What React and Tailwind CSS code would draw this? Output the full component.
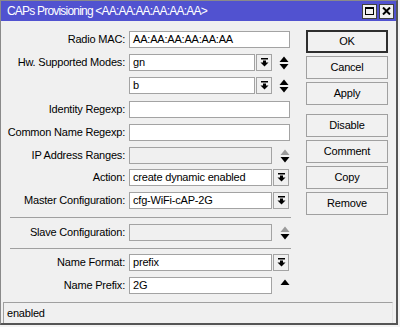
import React from 'react';

const DropIcon = () => (
  <svg width="9" height="9" viewBox="0 0 9 9">
    <rect x="1" y="0" width="7" height="1.5" fill="#000" />
    <path d="M3 2.5h3v2h2.5L4.5 8.5 0.5 4.5H3z" fill="#000" />
  </svg>
);

const UpDown = ({ upColor = '#000', downColor = '#000', down = true }) => (
  <svg width="10" height="14" viewBox="0 0 10 14">
    <path d="M5 0.5L9.5 6H0.5z" fill={upColor} />
    {down && <path d="M0.5 8H9.5L5 13.5z" fill={downColor} />}
  </svg>
);

const Field = ({ value = '', width, disabled }) => (
  <div
    className={`h-[17px] border border-[#a3a3a3] pl-[3px] leading-[15px] text-[11px] tracking-[-0.2px] text-black whitespace-nowrap overflow-hidden ${disabled ? 'bg-[#f0f0f0]' : 'bg-white'}`}
    style={{ width }}
  >
    {value}
  </div>
);

const DropBtn = () => (
  <div className="w-[16px] h-[17px] border border-[#a3a3a3] bg-[#f0f0f0] flex items-center justify-center">
    <DropIcon />
  </div>
);

const Row = ({ label, className = '', children }) => (
  <div className={`flex items-center h-[17px] ${className}`}>
    <div className="w-[124px] text-right text-[11px] tracking-[-0.2px] text-black whitespace-nowrap">{label}</div>
    <div className="ml-[4px] flex items-center">{children}</div>
  </div>
);

const Arrows = (props) => (
  <div className="w-[18px] flex items-center justify-end pr-[1px]">
    <UpDown {...props} />
  </div>
);

const Btn = ({ children, primary, className = '' }) => (
  <div
    className={`h-[23px] flex items-center justify-center text-[11px] tracking-[-0.2px] text-black bg-[#f1f1f1] ${primary ? 'border-2 border-[#2e2e2e]' : 'border border-[#a0a0a0]'} ${className}`}
  >
    {children}
  </div>
);

const Separator = ({ className = '' }) => (
  <div className={`ml-[9px] w-[281px] border-t border-[#a0a0a0] ${className}`} />
);

export default function App() {
  return (
    <div className="w-[400px] h-[327px] bg-[#f3f3f3] overflow-hidden font-['Liberation_Sans',Arial,sans-serif]">
      <div className="w-[398px] h-[325px] bg-[#f0f0f0] border-t border-l border-[#8a8a8a] border-r-2 border-b-2 border-r-[#555] border-b-[#555] flex flex-col">
        {/* Title bar */}
        <div className="h-[20px] bg-[#5152d0] flex items-center pl-[6px] pr-[2px]">
          <span className="text-white text-[12px] tracking-[-0.8px] whitespace-nowrap">
            CAPs Provisioning &lt;AA:AA:AA:AA:AA:AA&gt;
          </span>
          <div className="ml-auto flex gap-[2px]">
            <div className="w-[15px] h-[15px] bg-[#f0f0f0] border border-[#404040] flex items-center justify-center">
              <div className="w-[9px] h-[8px] border border-black border-t-2" />
            </div>
            <div className="w-[15px] h-[15px] bg-[#f0f0f0] border border-[#404040] flex items-center justify-center">
              <svg width="9" height="8" viewBox="0 0 9 8">
                <path d="M1 0.5L8 7.5M8 0.5L1 7.5" stroke="#000" strokeWidth="2" />
              </svg>
            </div>
          </div>
        </div>

        <div className="flex flex-1">
          {/* Form */}
          <div className="w-[305px] pt-[10px] flex flex-col">
            <Row label="Radio MAC:">
              <Field value="AA:AA:AA:AA:AA:AA" width={161} />
            </Row>
            <Row label="Hw. Supported Modes:" className="mt-[6px]">
              <Field value="gn" width={126} />
              <div className="ml-[1px]"><DropBtn /></div>
              <Arrows />
            </Row>
            <Row label="" className="mt-[6px]">
              <Field value="b" width={126} />
              <div className="ml-[1px]"><DropBtn /></div>
              <Arrows />
            </Row>
            <Row label="Identity Regexp:" className="mt-[7px]">
              <Field width={161} />
            </Row>
            <Row label="Common Name Regexp:" className="mt-[6px]">
              <Field width={161} />
            </Row>
            <Row label="IP Address Ranges:" className="mt-[6px]">
              <Field width={143} disabled />
              <div className="w-[1px]" />
              <Arrows upColor="#9a9a9a" />
            </Row>
            <Row label="Action:" className="mt-[5px]">
              <Field value="create dynamic enabled" width={143} />
              <div className="ml-[1px]"><DropBtn /></div>
            </Row>
            <Row label="Master Configuration:" className="mt-[6px]">
              <Field value="cfg-WiFi-cAP-2G" width={143} />
              <div className="ml-[1px]"><DropBtn /></div>
            </Row>
            <Separator className="mt-[8px]" />
            <Row label="Slave Configuration:" className="mt-[6px]">
              <Field width={143} disabled />
              <div className="w-[1px]" />
              <Arrows upColor="#9a9a9a" />
            </Row>
            <Separator className="mt-[7px]" />
            <Row label="Name Format:" className="mt-[5px]">
              <Field value="prefix" width={143} />
              <div className="ml-[1px]"><DropBtn /></div>
            </Row>
            <Row label="Name Prefix:" className="mt-[6px]">
              <Field value="2G" width={143} />
              <div className="w-[1px]" />
              <Arrows down={false} />
            </Row>
          </div>

          {/* Buttons */}
          <div className="w-[82px] pt-[9px] flex flex-col">
            <Btn primary>OK</Btn>
            <Btn className="mt-[3px]">Cancel</Btn>
            <Btn className="mt-[3px]">Apply</Btn>
            <Btn className="mt-[9px]">Disable</Btn>
            <Btn className="mt-[3px]">Comment</Btn>
            <Btn className="mt-[3px]">Copy</Btn>
            <Btn className="mt-[3px]">Remove</Btn>
          </div>
        </div>

        {/* Status bar */}
        <div className="ml-[2px] mr-[3px] h-[21px] border-t border-l border-[#a0a0a0] border-r border-r-[#e4e4e4] flex items-center pl-[3px] text-[11px] tracking-[-0.2px] text-black">
          enabled
        </div>
      </div>
    </div>
  );
}
